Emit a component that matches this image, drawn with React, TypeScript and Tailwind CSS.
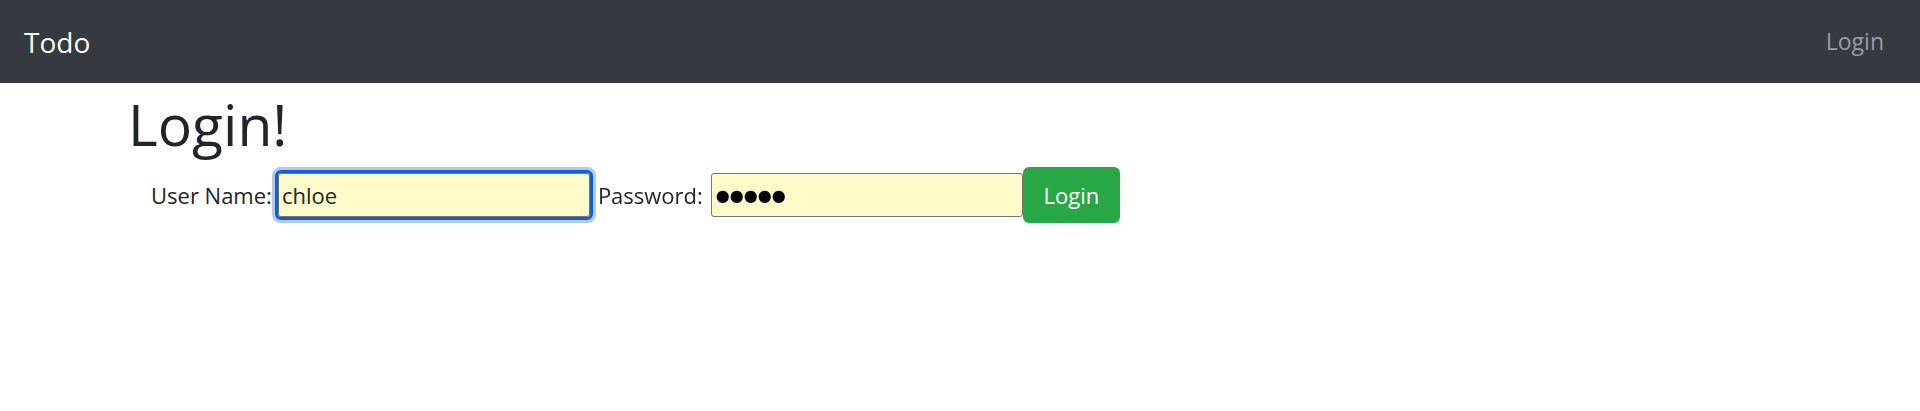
export default function App() {
  return (
    <div className="min-h-screen bg-white font-['Open_Sans',sans-serif] text-[#212529]">
      {/* navbar */}
      <nav className="flex h-[83px] items-center justify-between bg-[#343a40] px-6">
        <span className="text-[28px] text-white">Todo</span>
        <a className="px-3 text-[23px] text-white/50">Login</a>
      </nav>

      <div className="pl-[128px]">
        <h1 className="mt-[6px] text-[57px] leading-[70px]">Login!</h1>
        <form className="mt-[8px] flex items-center pl-[23px] text-[22px]">
          <label className="mr-[6px]">User Name:</label>
          <input
            className="h-[44px] w-[312px] rounded-[3px] border border-[#767676] bg-[#fefac9] px-[3px] text-[22px] outline-[3px] outline-[#0f5fd6] ring-[6px] ring-[#b3c9ef]"
            defaultValue="chloe"
            autoFocus
          />
          <label className="ml-[8px] mr-[8px]">Password:</label>
          <input
            readOnly
            className="h-[44px] w-[312px] rounded-[3px] border border-[#767676] bg-[#fefac9] px-[4px] font-['DejaVu_Sans'] text-[16px] text-black"
            value="●●●●●"
          />
          <button
            type="button"
            className="h-[56px] w-[97px] rounded-[6px] bg-[#28a745] text-[22px] text-white"
          >
            Login
          </button>
        </form>
      </div>
    </div>
  );
}
